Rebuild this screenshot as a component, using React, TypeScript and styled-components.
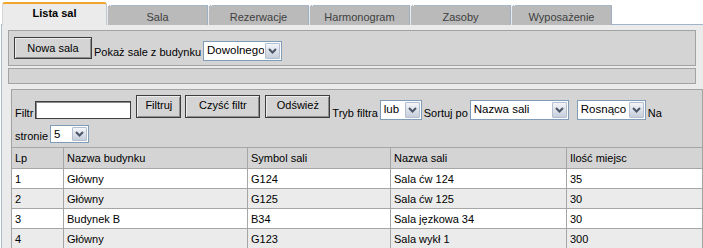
import React from "react";
import styled, { createGlobalStyle } from "styled-components";

const GlobalStyle = createGlobalStyle`
  html, body {
    margin: 0;
    padding: 0;
    background: #ffffff;
  }
  body {
    font-family: "Liberation Sans", Arial, sans-serif;
    font-size: 11px;
    color: #000000;
  }
  * {
    box-sizing: border-box;
  }
`;

const Page = styled.div`
  width: 703px;
  height: 248px;
  overflow: hidden;
  padding: 2px 0 0 1px;
`;

const TabBar = styled.div`
  position: relative;
  z-index: 1;
  display: flex;
  align-items: flex-end;
  height: 23px;
  margin-bottom: -1px;
  padding-left: 1px;
`;

const Tab = styled.div<{ $active?: boolean }>`
  position: relative;
  width: ${(p) => (p.$active ? 105 : 101)}px;
  height: ${(p) => (p.$active ? 23 : 20)}px;
  padding-top: ${(p) => (p.$active ? 3 : 5)}px;
  text-align: center;
  line-height: 13px;
  font-weight: ${(p) => (p.$active ? 700 : 400)};
  color: ${(p) => (p.$active ? "#000000" : "#404040")};
  background: ${(p) => (p.$active ? "#ebebeb" : "#bababa")};
  border-top: ${(p) => (p.$active ? "2px solid #f2a630" : "1px solid #a9b8c6")};
  border-left: 1px solid ${(p) => (p.$active ? "#d2d6db" : "#e6eaef")};
  border-right: 1px solid ${(p) => (p.$active ? "#c2c8cf" : "#9eb1c3")};
  border-radius: ${(p) => (p.$active ? "3px 3px 0 0" : "0")};

  &::before {
    content: ${(p) => (p.$active ? "none" : '""')};
    position: absolute;
    top: -1px;
    left: -1px;
    width: 3px;
    height: 3px;
    border-top: 1px dotted #f4f6f8;
    border-left: 1px dotted #f4f6f8;
  }
`;

const Panel = styled.div`
  height: 225px;
  background: #ebebeb;
  border-top: 1px solid #9fb4c8;
  border-left: 1px solid #aabdce;
  padding: 5px 0 0 6px;
  overflow: hidden;
`;

const Box = styled.div`
  background: #d4d4d4;
  border: 1px solid #a3a3a3;
`;

const Toolbar = styled(Box)`
  display: flex;
  align-items: flex-start;
  height: 36px;
  margin-right: 7px;
  padding-left: 5px;
`;

const StatusStrip = styled(Box)`
  height: 16px;
  margin: 2px 7px 0 0;
`;

const ListBox = styled(Box)`
  margin: 5px 0 0 3px;
  border-bottom: none;
`;

const FilterBar = styled.div`
  display: flex;
  flex-direction: column;
  height: 57px;
  padding-left: 3px;
`;

const FilterRow = styled.div<{ $h: number }>`
  display: flex;
  align-items: flex-start;
  height: ${(p) => p.$h}px;
`;

const Label = styled.span<{ $top: number; $gap?: number }>`
  margin-top: ${(p) => p.$top}px;
  margin-left: ${(p) => p.$gap ?? 0}px;
  line-height: 13px;
  white-space: nowrap;
`;

const Button = styled.button<{
  $w: number;
  $h: number;
  $top: number;
  $gap?: number;
  $lift?: number;
}>`
  width: ${(p) => p.$w}px;
  height: ${(p) => p.$h}px;
  margin: ${(p) => p.$top}px 0 0 ${(p) => p.$gap ?? 0}px;
  padding: 0 0 ${(p) => p.$lift ?? 0}px 0;
  font: inherit;
  color: #000000;
  background: #d4d4d4;
  border: 1px solid #3d3d3d;
  box-shadow: inset 1px 1px 0 #ececec, inset -1px -1px 0 #8e8e8e;
  cursor: pointer;
`;

const TextInput = styled.input<{ $w: number; $top: number; $gap?: number }>`
  width: ${(p) => p.$w}px;
  height: 18px;
  margin: ${(p) => p.$top}px 0 0 ${(p) => p.$gap ?? 0}px;
  padding: 0 2px;
  font: inherit;
  background: #ffffff;
  border: 1px solid #3f3f3f;
  box-shadow: inset 1px 1px 0 #8a8a8a;
  outline: none;
`;

const SelectBox = styled.div<{ $w: number; $h?: number; $top: number; $gap?: number }>`
  display: flex;
  align-items: stretch;
  width: ${(p) => p.$w}px;
  height: ${(p) => p.$h ?? 20}px;
  margin: ${(p) => p.$top}px 0 0 ${(p) => p.$gap ?? 0}px;
  background: #ffffff;
  border: 1px solid #7f9db9;
  cursor: default;
`;

const SelectValue = styled.span`
  flex: 1;
  padding-left: 3px;
  font-size: 11.5px;
  line-height: 16px;
  white-space: nowrap;
  overflow: hidden;
`;

const SelectArrow = styled.span`
  display: flex;
  align-items: center;
  justify-content: center;
  width: 15px;
  margin: 1px;
  background: linear-gradient(#f3f5f9, #c6cedb);
  border: 1px solid #b3bfd1;
  border-radius: 1px;
`;

const Table = styled.div`
  border-top: 1px solid #a6a6a6;
  background: #ffffff;
`;

const Row = styled.div<{ $h: number; $bg: string }>`
  display: grid;
  grid-template-columns: 52px 184px 143px 176px 1fr;
  height: ${(p) => p.$h}px;
  background: ${(p) => p.$bg};
  border-bottom: 1px solid #a6a6a6;
`;

const Cell = styled.div`
  display: flex;
  align-items: center;
  padding-left: 3px;
  white-space: nowrap;
  overflow: hidden;
  border-right: 1px solid #a6a6a6;

  &:last-child {
    border-right: none;
  }
`;

const Chevron = () => (
  <svg width="9" height="6" viewBox="0 0 9 6">
    <polyline
      points="1,1 4.5,4.5 8,1"
      fill="none"
      stroke="#4a5668"
      strokeWidth="2"
    />
  </svg>
);

type SelectProps = {
  value: string;
  w: number;
  h?: number;
  top: number;
  gap?: number;
};

const Select: React.FC<SelectProps> = ({ value, w, h, top, gap }) => (
  <SelectBox $w={w} $h={h} $top={top} $gap={gap}>
    <SelectValue>{value}</SelectValue>
    <SelectArrow>
      <Chevron />
    </SelectArrow>
  </SelectBox>
);

const tabs = ["Lista sal", "Sala", "Rezerwacje", "Harmonogram", "Zasoby", "Wyposażenie"];

const columns = ["Lp", "Nazwa budynku", "Symbol sali", "Nazwa sali", "Ilość miejsc"];

const rooms = [
  ["1", "Główny", "G124", "Sala ćw 124", "35"],
  ["2", "Główny", "G125", "Sala ćw 125", "30"],
  ["3", "Budynek B", "B34", "Sala jęzkowa 34", "30"],
  ["4", "Główny", "G123", "Sala wykł 1", "300"],
];

const App: React.FC = () => {
  return (
    <Page>
      <GlobalStyle />
      <TabBar>
        {tabs.map((t, i) => (
          <Tab key={t} $active={i === 0}>
            {t}
          </Tab>
        ))}
      </TabBar>
      <Panel>
        <Toolbar>
          <Button $w={78} $h={22} $top={6}>
            Nowa sala
          </Button>
          <Label $top={15} $gap={2}>
            Pokaż sale z budynku
          </Label>
          <Select value="Dowolnego" w={79} top={10} gap={2} />
        </Toolbar>
        <StatusStrip />
        <ListBox>
          <FilterBar>
            <FilterRow $h={31}>
              <Label $top={17}>Filtr</Label>
              <TextInput $w={96} $top={11} $gap={2} />
              <Button $w={45} $h={23} $top={5} $gap={5} $lift={3}>
                Filtruj
              </Button>
              <Button $w={75} $h={23} $top={5} $gap={4} $lift={3}>
                Czyść filtr
              </Button>
              <Button $w={65} $h={23} $top={5} $gap={5} $lift={3}>
                Odśwież
              </Button>
              <Label $top={17} $gap={2}>
                Tryb filtra
              </Label>
              <Select value="lub" w={42} top={10} gap={2} />
              <Label $top={17} $gap={2}>
                Sortuj po
              </Label>
              <Select value="Nazwa sali" w={99} top={10} gap={2} />
              <Select value="Rosnąco" w={69} top={10} gap={8} />
              <Label $top={17} $gap={2}>
                Na
              </Label>
            </FilterRow>
            <FilterRow $h={26}>
              <Label $top={9}>stronie</Label>
              <Select value="5" w={39} h={18} top={4} gap={2} />
            </FilterRow>
          </FilterBar>
          <Table>
            <Row $h={21} $bg="#d4d4d4">
              {columns.map((c) => (
                <Cell key={c}>{c}</Cell>
              ))}
            </Row>
            {rooms.map((r, i) => (
              <Row key={r[0]} $h={20} $bg={i % 2 === 0 ? "#ffffff" : "#ebebeb"}>
                {r.map((v, j) => (
                  <Cell key={j}>{v}</Cell>
                ))}
              </Row>
            ))}
          </Table>
        </ListBox>
      </Panel>
    </Page>
  );
};

export default App;
